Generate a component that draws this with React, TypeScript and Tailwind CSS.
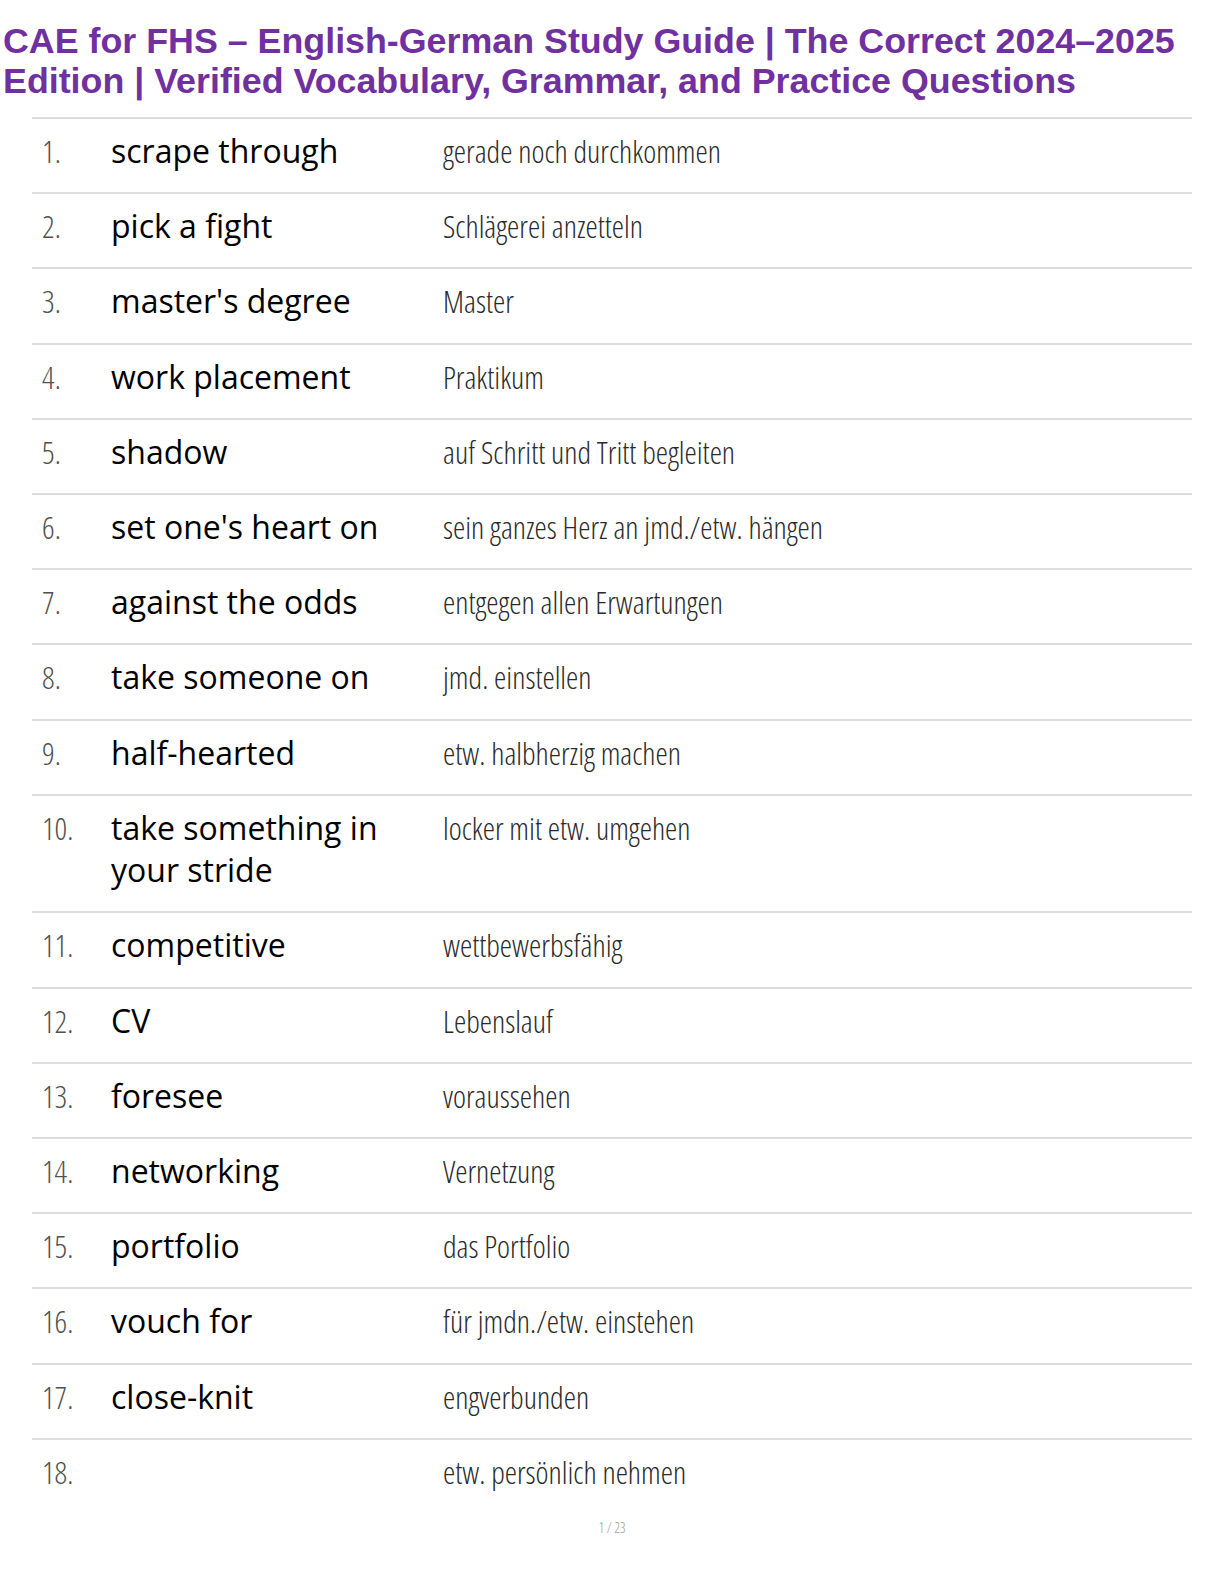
import React from 'react'

type Entry = { en: string; de: string }

const entries: Entry[] = [
  { en: 'scrape through', de: 'gerade noch durchkommen' },
  { en: 'pick a fight', de: 'Schlägerei anzetteln' },
  { en: "master's degree", de: 'Master' },
  { en: 'work placement', de: 'Praktikum' },
  { en: 'shadow', de: 'auf Schritt und Tritt begleiten' },
  { en: "set one's heart on", de: 'sein ganzes Herz an jmd./etw. hängen' },
  { en: 'against the odds', de: 'entgegen allen Erwartungen' },
  { en: 'take someone on', de: 'jmd. einstellen' },
  { en: 'half-hearted', de: 'etw. halbherzig machen' },
  { en: 'take something in your stride', de: 'locker mit etw. umgehen' },
  { en: 'competitive', de: 'wettbewerbsfähig' },
  { en: 'CV', de: 'Lebenslauf' },
  { en: 'foresee', de: 'voraussehen' },
  { en: 'networking', de: 'Vernetzung' },
  { en: 'portfolio', de: 'das Portfolio' },
  { en: 'vouch for', de: 'für jmdn./etw. einstehen' },
  { en: 'close-knit', de: 'engverbunden' },
  { en: '', de: 'etw. persönlich nehmen' },
]

const thin = "font-['Open_Sans','Noto_Sans',sans-serif] font-light font-stretch-condensed"

function Row({ n, entry }: { n: number; entry: Entry }) {
  return (
    <div className="flex border-t-2 border-[#dcdce2] pt-[11px] pb-[19.7px] leading-[42.5px]">
      <div className={`w-[79px] shrink-0 pl-[10px] text-[31px] text-[#505050] ${thin}`}>{n}.</div>
      <div className="w-[332px] shrink-0 pr-[10px] text-[32px] text-black font-['Open_Sans','Noto_Sans',sans-serif]">
        {entry.en}
      </div>
      <div className={`flex-1 text-[31px] text-[#2a2a2a] ${thin}`}>{entry.de}</div>
    </div>
  )
}

export default function App() {
  return (
    <div className="min-h-[1584px] w-[1224px] bg-white">
      <h1 className="pl-[3px] pt-[21px] text-[35.8px] font-bold leading-[40px] text-[#7030a0] font-['Liberation_Sans',Arial,sans-serif]">
        CAE for FHS – English-German Study Guide | The Correct 2024–2025 Edition | Verified Vocabulary, Grammar, and Practice Questions
      </h1>
      <div className="ml-[32px] mt-[16px] w-[1160px]">
        {entries.map((e, i) => (
          <Row key={i} n={i + 1} entry={e} />
        ))}
      </div>
      <div className={`mt-[4px] text-center text-[14px] text-[#9a9a9a] ${thin}`}>1 / 23</div>
    </div>
  )
}
